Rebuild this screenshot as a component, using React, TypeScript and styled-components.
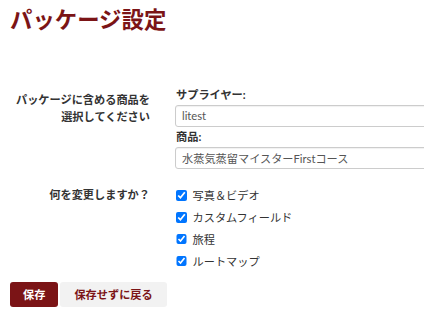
import React from "react";
import styled, { createGlobalStyle } from "styled-components";

const Global = createGlobalStyle`
  html, body { margin: 0; padding: 0; overflow: hidden; background: #fff; }
  body {
    font-family: Lato, "Noto Sans CJK JP", sans-serif;
    font-size: 11.2px;
    color: #333;
  }
`;

const Page = styled.div`
  padding: 0 0 0 10px;
  width: 424px;
  box-sizing: border-box;
`;

const Title = styled.h1`
  margin: 4px 0 0;
  font-size: 22.4px;
  line-height: 32px;
  font-weight: 700;
  color: #7b1416;
`;

const Form = styled.form`
  margin-top: 51px;
  display: flex;
  flex-direction: column;
`;

const Row = styled.div<{ $after: number }>`
  display: grid;
  grid-template-columns: 140px 260px;
  column-gap: 25px;
  margin-bottom: ${(p) => p.$after}px;
`;

const RowLabel = styled.div<{ $top: number }>`
  text-align: right;
  font-weight: 700;
  line-height: 16.8px;
  padding-top: ${(p) => p.$top}px;
  color: #333;
`;

const Field = styled.div`
  display: flex;
  flex-direction: column;
`;

const FieldLabel = styled.label`
  font-weight: 700;
  line-height: 16.8px;
  padding-left: 1px;
  margin-bottom: 1px;
`;

const Input = styled.div`
  height: 22px;
  box-sizing: border-box;
  border: 1px solid #ccc;
  border-radius: 3px;
  padding: 0 6px;
  margin-bottom: 2px;
  display: flex;
  align-items: center;
  color: #555;
  font-size: 11.2px;
  box-shadow: inset 0 1px 1px rgba(0, 0, 0, 0.06);
`;

const Checks = styled.div`
  display: flex;
  flex-direction: column;
`;

const CheckRow = styled.label`
  display: flex;
  align-items: center;
  height: 21.8px;
  gap: 6px;
  color: #333;
`;

const Box = styled.input`
  width: 10.5px;
  height: 10.5px;
  margin: 0 0 0 1px;
  accent-color: #0075ff;
`;

const Buttons = styled.div`
  display: flex;
  gap: 2px;
`;

const Button = styled.button<{ $primary?: boolean }>`
  font-family: inherit;
  font-size: 11.2px;
  font-weight: 700;
  height: 25px;
  padding: 0 ${(p) => (p.$primary ? 13 : 14)}px;
  border: none;
  border-radius: 3px;
  background: ${(p) => (p.$primary ? "#7b1416" : "#f2f2f2")};
  color: ${(p) => (p.$primary ? "#fff" : "#7b1416")};
  cursor: pointer;
`;

const items = ["写真＆ビデオ", "カスタムフィールド", "旅程", "ルートマップ"];

export default function App() {
  return (
    <>
      <Global />
      <Page>
        <Title>パッケージ設定</Title>
        <Form onSubmit={(e) => e.preventDefault()}>
          <Row $after={14}>
            <RowLabel $top={5}>
              パッケージに含める商品を
              <br />
              選択してください
            </RowLabel>
            <Field>
              <FieldLabel>サプライヤー:</FieldLabel>
              <Input>litest</Input>
              <FieldLabel>商品:</FieldLabel>
              <Input>水蒸気蒸留マイスターFirstコース</Input>
            </Field>
          </Row>
          <Row $after={10}>
            <RowLabel $top={2}>何を変更しますか？</RowLabel>
            <Checks>
              {items.map((t) => (
                <CheckRow key={t}>
                  <Box type="checkbox" defaultChecked />
                  {t}
                </CheckRow>
              ))}
            </Checks>
          </Row>
          <Buttons>
            <Button $primary>保存</Button>
            <Button>保存せずに戻る</Button>
          </Buttons>
        </Form>
      </Page>
    </>
  );
}
